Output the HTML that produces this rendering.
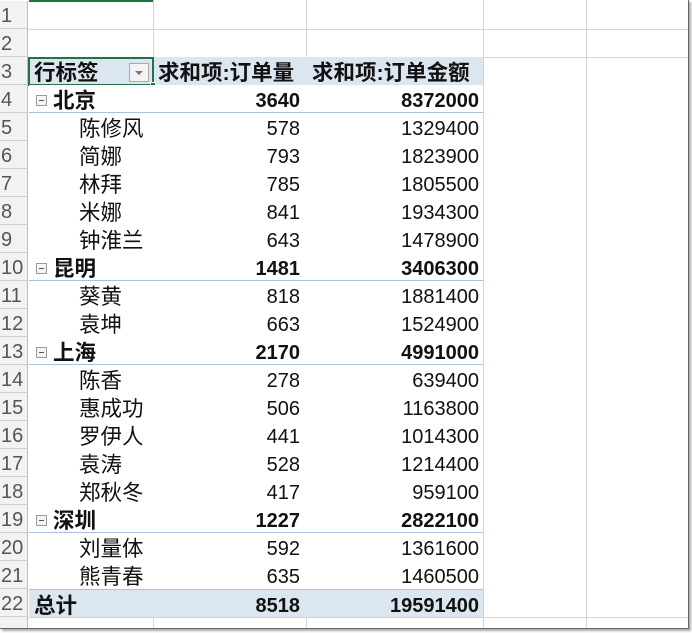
<!DOCTYPE html>
<html><head><meta charset="utf-8"><style>
*{margin:0;padding:0;box-sizing:border-box}
body{width:692px;height:633px;background:#fff;position:relative;overflow:hidden;font-family:"Liberation Sans","Noto Sans CJK SC",sans-serif;font-size:20px;color:#111}
.win{position:absolute;left:0;top:0;width:689px;height:629px;border-right:1px solid #666;border-bottom:1px solid #666;box-shadow:2px 2px 2px #aaa;overflow:hidden;background:#fff}
.vl{position:absolute;top:0;width:1px;height:633px;background:#d4d4d4}
.hl{position:absolute;left:0;width:692px;height:1px;background:#d4d4d4}
.rh{position:absolute;left:0;width:28px;height:28px;background:#f2f2f2;border-bottom:1px solid #d0d0d0;border-right:1px solid #bdbdbd;color:#555;font-size:20px;line-height:30px;text-align:left;padding-left:1px}
.row{position:absolute;left:29px;width:454px;height:28px;background:#fff;line-height:30px}
.row span{position:absolute;top:1px}
.k{font-size:21.5px}
.a{left:50px}
.b{right:183px}
.c{right:4px}
.g{font-weight:bold}
.g .a{left:24px}
.hd{background:#dce6f1;font-weight:bold}
.bl{border-bottom:1px solid #a9c1dc}
.box{position:absolute;left:7px;top:10px;width:11px;height:11px;border:1px solid #999;background:#f4f4f4}
.box:after{content:"";position:absolute;left:2px;top:4px;width:5px;height:1px;background:#555}
</style></head><body><div class="win">
<div class="vl" style="left:153px"></div><div class="vl" style="left:306px"></div><div class="vl" style="left:483px"></div><div class="vl" style="left:586px"></div>
<div class="hl" style="top:29px"></div><div class="hl" style="top:57px"></div><div class="hl" style="top:617px"></div>
<div style="position:absolute;left:29px;top:0;width:124px;height:2px;background:#217346"></div>
<div class="rh" style="top:1px">1</div><div class="rh" style="top:29px">2</div>
<div class="rh" style="top:57px">3</div><div class="rh" style="top:85px">4</div><div class="rh" style="top:113px">5</div><div class="rh" style="top:141px">6</div><div class="rh" style="top:169px">7</div><div class="rh" style="top:197px">8</div><div class="rh" style="top:225px">9</div><div class="rh" style="top:253px">10</div><div class="rh" style="top:281px">11</div><div class="rh" style="top:309px">12</div><div class="rh" style="top:337px">13</div><div class="rh" style="top:365px">14</div><div class="rh" style="top:393px">15</div><div class="rh" style="top:421px">16</div><div class="rh" style="top:449px">17</div><div class="rh" style="top:477px">18</div><div class="rh" style="top:505px">19</div><div class="rh" style="top:533px">20</div><div class="rh" style="top:561px">21</div><div class="rh" style="top:589px">22</div><div class="rh" style="top:617px;height:14px"></div>

<div class="row hd" style="top:57px"><span style="left:130px;width:124px;height:28px;background:#dce6f1;top:0"></span><span class="k" style="left:129px">求和项:订单量</span><span class="k" style="left:283px">求和项:订单金额</span></div>
<div style="position:absolute;left:28px;top:57px;width:126px;height:29px;border:2px solid #217346;background:#dce6f1;line-height:28px;font-weight:bold;padding-left:4px"><span class="k">行标签</span><div style="position:absolute;left:99px;top:4px;width:20px;height:19px;border:1px solid #aaa;background:#f3f3f3"><div style="position:absolute;left:5px;top:7px;border-left:4px solid transparent;border-right:4px solid transparent;border-top:4px solid #777"></div></div></div>
<div style="position:absolute;left:150px;top:82px;width:6px;height:6px;background:#217346;border:1px solid #fff"></div>

<div class="row g bl" style="top:85px"><div class="box"></div><span class="a k">北京</span><span class="b">3640</span><span class="c">8372000</span></div>
<div class="row" style="top:113px"><span class="a k">陈修风</span><span class="b">578</span><span class="c">1329400</span></div>
<div class="row" style="top:141px"><span class="a k">简娜</span><span class="b">793</span><span class="c">1823900</span></div>
<div class="row" style="top:169px"><span class="a k">林拜</span><span class="b">785</span><span class="c">1805500</span></div>
<div class="row" style="top:197px"><span class="a k">米娜</span><span class="b">841</span><span class="c">1934300</span></div>
<div class="row" style="top:225px"><span class="a k">钟淮兰</span><span class="b">643</span><span class="c">1478900</span></div>
<div class="row g bl" style="top:253px"><div class="box"></div><span class="a k">昆明</span><span class="b">1481</span><span class="c">3406300</span></div>
<div class="row" style="top:281px"><span class="a k">葵黄</span><span class="b">818</span><span class="c">1881400</span></div>
<div class="row" style="top:309px"><span class="a k">袁坤</span><span class="b">663</span><span class="c">1524900</span></div>
<div class="row g bl" style="top:337px"><div class="box"></div><span class="a k">上海</span><span class="b">2170</span><span class="c">4991000</span></div>
<div class="row" style="top:365px"><span class="a k">陈香</span><span class="b">278</span><span class="c">639400</span></div>
<div class="row" style="top:393px"><span class="a k">惠成功</span><span class="b">506</span><span class="c">1163800</span></div>
<div class="row" style="top:421px"><span class="a k">罗伊人</span><span class="b">441</span><span class="c">1014300</span></div>
<div class="row" style="top:449px"><span class="a k">袁涛</span><span class="b">528</span><span class="c">1214400</span></div>
<div class="row" style="top:477px"><span class="a k">郑秋冬</span><span class="b">417</span><span class="c">959100</span></div>
<div class="row g bl" style="top:505px"><div class="box"></div><span class="a k">深圳</span><span class="b">1227</span><span class="c">2822100</span></div>
<div class="row" style="top:533px"><span class="a k">刘量体</span><span class="b">592</span><span class="c">1361600</span></div>
<div class="row" style="top:561px"><span class="a k">熊青春</span><span class="b">635</span><span class="c">1460500</span></div>
<div class="row hd" style="top:589px;border-top:1px solid #a9c1dc"><span class="k" style="left:5px">总计</span><span class="b">8518</span><span class="c">19591400</span></div>
</div></body></html>
